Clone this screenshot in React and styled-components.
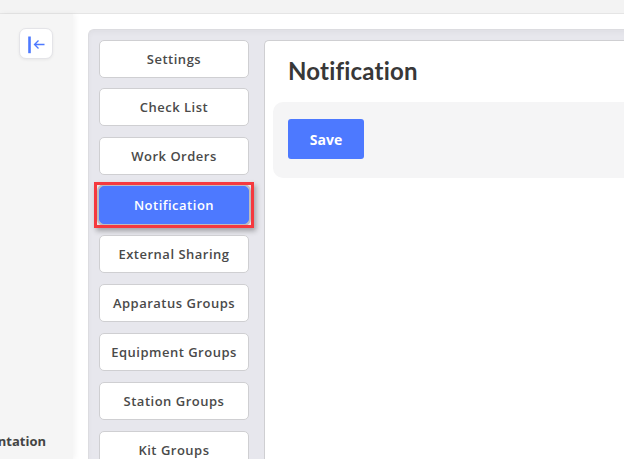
import React from 'react';
import styled, { createGlobalStyle } from 'styled-components';

const Global = createGlobalStyle`
  html, body {
    margin: 0;
    height: 100%;
    overflow: hidden;
    background: #fff;
  }
  #root {
    height: 459px;
    overflow: hidden;
  }
  * {
    box-sizing: border-box;
  }
`;

const Page = styled.div`
  width: 624px;
  height: 459px;
  display: flex;
  flex-direction: column;
  overflow: hidden;
  font-family: "Open Sans", sans-serif;
`;

const TopBar = styled.div`
  flex: 0 0 14px;
  background: #f3f3f3;
  border-bottom: 1px solid #e5e5e5;
`;

const Body = styled.div`
  flex: 1;
  display: flex;
  min-height: 0;
`;

const Sidebar = styled.aside`
  flex: 0 0 73px;
  background: #f5f5f5;
  box-shadow: 2px 0 6px rgba(0, 0, 0, 0.05);
  display: flex;
  flex-direction: column;
  align-items: flex-end;
  justify-content: space-between;
  padding: 14px 20px 9px 0;
`;

const Collapse = styled.button`
  width: 34px;
  height: 31px;
  padding: 0;
  display: flex;
  align-items: center;
  justify-content: center;
  background: #fff;
  border: 1px solid #e4e4e8;
  border-radius: 7px;
  box-shadow: 0 1px 3px rgba(0, 0, 0, 0.06);
`;

const SideLabel = styled.div`
  align-self: flex-end;
  margin-right: 7px;
  font-size: 13px;
  font-weight: 700;
  line-height: 18px;
  color: #444;
  white-space: nowrap;
  display: flex;
  justify-content: flex-end;
  width: 0;
`;

const Main = styled.main`
  flex: 1;
  min-width: 0;
  padding: 15px 0 0 15px;
`;

const Panel = styled.div`
  height: 100%;
  width: 600px;
  display: flex;
  gap: 15px;
  padding: 10px 0 0 10px;
  background: #e7e7ed;
  border-top: 1px solid #dcdce0;
  border-left: 1px solid #dcdce0;
  border-radius: 6px 0 0 0;
  box-shadow: inset 0 3px 4px rgba(0, 0, 0, 0.03);
`;

const Tabs = styled.nav`
  flex: 0 0 150px;
  margin-top: -0.4px;
  display: flex;
  flex-direction: column;
  gap: 10.875px;
`;

const Tab = styled.button`
  position: relative;
  flex: 0 0 38px;
  width: 150px;
  padding: 0;
  font-family: "Open Sans", sans-serif;
  font-size: 13px;
  font-weight: 600;
  letter-spacing: 0.5px;
  color: ${p => (p.$active ? '#fff' : '#4a4a4a')};
  background: ${p => (p.$active ? '#4d79ff' : '#fff')};
  border: 1px solid ${p => (p.$active ? '#4d79ff' : '#cfcfd2')};
  border-radius: 5px;
  box-shadow: ${p => (p.$active ? '0 0 0 2px #bcbcbf' : 'none')};

  ${p => p.$active && `
    &::after {
      content: '';
      position: absolute;
      inset: -5px -6px -5px -6px;
      border: 3px solid #f5393e;
      box-shadow: 2px 3px 5px rgba(0, 0, 0, 0.3);
    }
  `}
`;

const Card = styled.section`
  flex: 1;
  padding: 15px 0 0 8px;
  background: #fff;
  border-top: 1px solid #cfcfd2;
  border-left: 1px solid #cfcfd2;
  border-radius: 5px 0 0 0;
`;

const Title = styled.h1`
  margin: 0 0 16px 15px;
  font-family: "Lato", sans-serif;
  font-size: 24px;
  font-weight: 700;
  line-height: 30px;
  letter-spacing: 0.2px;
  color: #383838;
  font-variant-ligatures: none;
`;

const ActionBar = styled.div`
  height: 76px;
  padding: 17px 0 0 15px;
  background: #f5f5f6;
  border-radius: 10px 0 0 10px;
`;

const SaveButton = styled.button`
  display: block;
  width: 76px;
  height: 40px;
  padding: 0;
  font-family: "Open Sans", sans-serif;
  font-size: 14px;
  font-weight: 700;
  color: #fff;
  background: #4d79ff;
  border: 0;
  border-radius: 3px;
`;

const tabs = [
  'Settings',
  'Check List',
  'Work Orders',
  'Notification',
  'External Sharing',
  'Apparatus Groups',
  'Equipment Groups',
  'Station Groups',
  'Kit Groups',
];

export default function App() {
  return (
    <Page>
      <Global />
      <TopBar />
      <Body>
        <Sidebar>
          <Collapse aria-label="Collapse">
            <svg width="18" height="20" viewBox="0 0 18 20" fill="none" stroke="#4d79ff">
              <path d="M2.5 2.5v16.7" strokeWidth="2.6" />
              <path d="M17.5 10.5H7.5M11.5 6.5l-4 4 4 4" strokeWidth="1.3" />
            </svg>
          </Collapse>
          <SideLabel>Documentation</SideLabel>
        </Sidebar>
        <Main>
          <Panel>
            <Tabs>
              {tabs.map(t => (
                <Tab key={t} $active={t === 'Notification'}>{t}</Tab>
              ))}
            </Tabs>
            <Card>
              <Title>Notification</Title>
              <ActionBar>
                <SaveButton>Save</SaveButton>
              </ActionBar>
            </Card>
          </Panel>
        </Main>
      </Body>
    </Page>
  );
}
